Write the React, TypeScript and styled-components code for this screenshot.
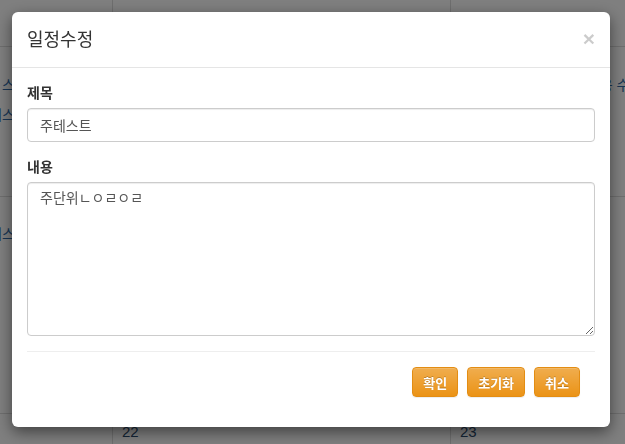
import styled, { createGlobalStyle } from "styled-components";

const GlobalStyle = createGlobalStyle`
  * {
    box-sizing: border-box;
  }
  html, body {
    margin: 0;
    padding: 0;
    width: 625px;
    height: 444px;
    overflow: hidden;
    background: #ffffff;
    font-family: "Liberation Sans", "Noto Sans CJK KR", sans-serif;
    font-size: 14px;
    line-height: 1.42857;
    color: #333333;
  }
`;

/* ---------- calendar behind the dialog ---------- */

const Calendar = styled.div`
  display: grid;
  grid-template-columns: 112px 338px 338px;
  grid-template-rows: 47px 150px 217px 60px;
  width: 625px;
  height: 444px;
  overflow: hidden;
`;

interface ICellProps {
  first?: boolean;
}

const Cell = styled.div<ICellProps>`
  border-bottom: 1px solid #dddddd;
  border-left: ${({ first }) => (first ? "none" : "1px solid #dddddd")};
  padding: 8px 9px;
  overflow: hidden;
  white-space: nowrap;
`;

const DayNum = styled.div`
  font-size: 15px;
  line-height: 20px;
  color: #2a4a6e;
`;

interface IEventProps {
  shift?: number;
  top?: number;
}

const Event = styled.div<IEventProps>`
  margin-top: ${({ top }) => top ?? 8}px;
  margin-left: ${({ shift }) => shift ?? 0}px;
  font-size: 14px;
  line-height: 20px;
  color: #2f6aa8;
`;

/* ---------- dialog ---------- */

const Backdrop = styled.div`
  position: fixed;
  inset: 0;
  background: rgba(0, 0, 0, 0.5);
  padding: 12px 0 0 12px;
`;

const Dialog = styled.div`
  width: 598px;
  height: 415px;
  background: #ffffff;
  border-radius: 6px;
  box-shadow: 0 5px 15px rgba(0, 0, 0, 0.5);
  display: flex;
  flex-direction: column;
`;

const Header = styled.div`
  display: flex;
  align-items: center;
  justify-content: space-between;
  height: 56px;
  padding: 0 15px;
  border-bottom: 1px solid #e5e5e5;
`;

const Title = styled.h4`
  margin: 0;
  font-size: 18px;
  font-weight: 400;
  line-height: 26px;
  color: #333333;
`;

const Close = styled.span`
  font-size: 21px;
  font-weight: 700;
  line-height: 1;
  color: #000000;
  opacity: 0.2;
  margin-top: -2px;
`;

const Body = styled.div`
  padding: 15px;
  display: flex;
  flex-direction: column;
`;

const Group = styled.div`
  display: flex;
  flex-direction: column;
  margin-bottom: 15px;
`;

const Label = styled.label`
  font-weight: 700;
  font-size: 14px;
  line-height: 20px;
  margin-bottom: 5px;
  color: #333333;
`;

const Field = styled.input`
  height: 34px;
  padding: 6px 12px;
  font: inherit;
  color: #555555;
  border: 1px solid #cccccc;
  border-radius: 4px;
  box-shadow: inset 0 1px 1px rgba(0, 0, 0, 0.075);
  outline: none;
`;

const Area = styled.textarea`
  height: 154px;
  padding: 6px 12px;
  font: inherit;
  color: #555555;
  border: 1px solid #cccccc;
  border-radius: 4px;
  box-shadow: inset 0 1px 1px rgba(0, 0, 0, 0.075);
  outline: none;
`;

const Rule = styled.hr`
  margin: 0 0 15px;
  border: 0;
  border-top: 1px solid #eeeeee;
`;

const Actions = styled.div`
  display: flex;
  justify-content: flex-end;
  gap: 9px;
  padding-right: 15px;
`;

const Button = styled.button`
  height: 30px;
  padding: 0 10px;
  font-family: inherit;
  font-size: 13px;
  font-weight: 700;
  color: #ffffff;
  text-shadow: 0 -1px 0 rgba(0, 0, 0, 0.2);
  background: linear-gradient(to bottom, #f0ad4e 0, #eb9316 100%);
  border: 1px solid #e38d13;
  border-radius: 4px;
  box-shadow: inset 0 1px 0 rgba(255, 255, 255, 0.15), 0 1px 1px rgba(0, 0, 0, 0.075);
`;

export default function App() {
  return (
    <>
      <GlobalStyle />
      <Calendar>
        <Cell first />
        <Cell />
        <Cell />

        <Cell first>
          <Event top={20} shift={-7}>
            스트 일정
          </Event>
          <Event top={10} shift={-20}>
            테스트
          </Event>
        </Cell>
        <Cell />
        <Cell>
          <Event top={20} shift={16}>
            주간회의 일정 테스트용 수정
          </Event>
        </Cell>

        <Cell first>
          <Event top={19} shift={-20}>
            테스트
          </Event>
        </Cell>
        <Cell />
        <Cell />

        <Cell first />
        <Cell>
          <DayNum>22</DayNum>
        </Cell>
        <Cell>
          <DayNum>23</DayNum>
        </Cell>
      </Calendar>

      <Backdrop>
        <Dialog>
          <Header>
            <Title>일정수정</Title>
            <Close>×</Close>
          </Header>
          <Body>
            <Group>
              <Label>제목</Label>
              <Field defaultValue="주테스트" />
            </Group>
            <Group>
              <Label>내용</Label>
              <Area defaultValue="주단위ㄴㅇㄹㅇㄹ" />
            </Group>
            <Rule />
            <Actions>
              <Button>확인</Button>
              <Button>초기화</Button>
              <Button>취소</Button>
            </Actions>
          </Body>
        </Dialog>
      </Backdrop>
    </>
  );
}
